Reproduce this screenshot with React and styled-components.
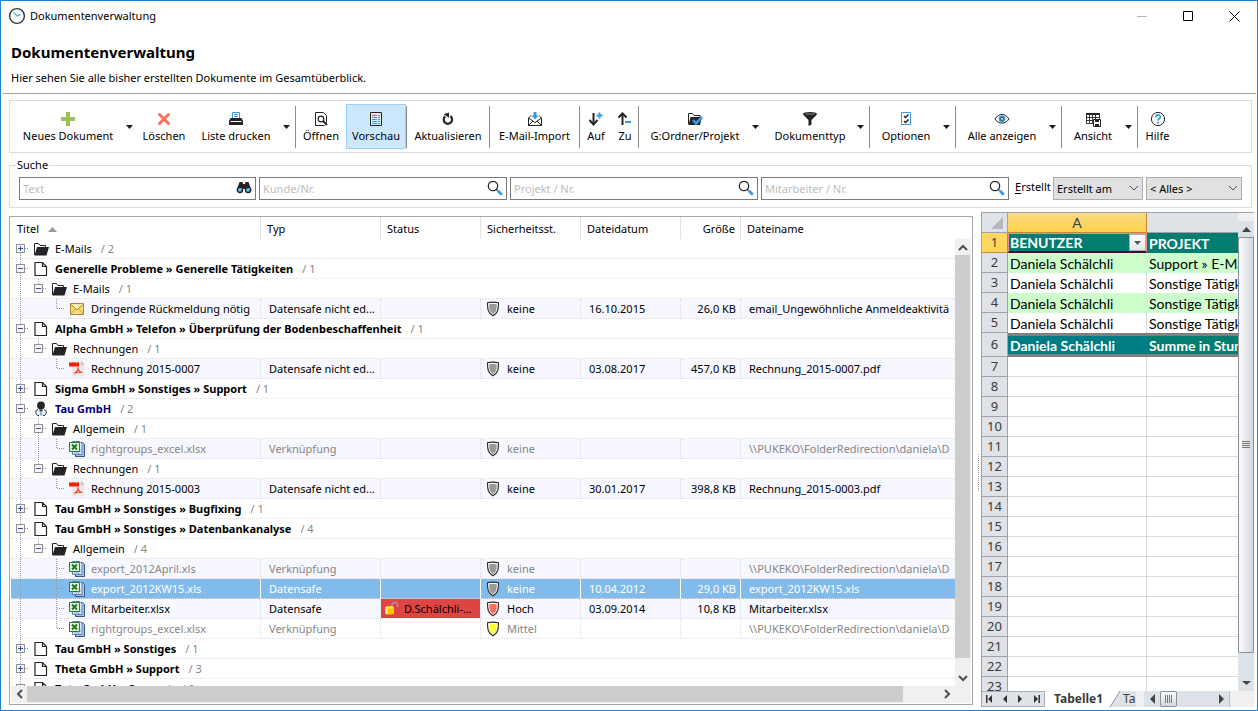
import React from "react";
import styled, { createGlobalStyle, css } from "styled-components";

const INK = "#222428";
const BLUE = "#3a9bdc";

const GlobalStyle = createGlobalStyle`
  *, *::before, *::after { box-sizing: border-box; }
  body {
    margin: 0;
    background: #fff;
    color: #000;
    font-family: "Noto Sans", "Open Sans", sans-serif;
    font-size: 11px;
    line-height: 16px;
  }
  button, input, select { font: inherit; color: inherit; }
  svg { display: block; flex: none; }
`;

/* ---------- window frame ---------- */

const Window = styled.div`
  display: flex;
  flex-direction: column;
  height: 100vh;
  min-width: 960px;
  border: 1px solid #1883d7;
  overflow: hidden;
`;

const TitleBar = styled.header`
  display: flex;
  align-items: center;
  height: 30px;
  padding-left: 7px;
  gap: 4px;
`;

const WindowTitle = styled.span`
  flex: 1;
`;

const WindowButton = styled.button`
  display: grid;
  place-items: center;
  width: 46px;
  height: 28px;
  padding: 0;
  border: 0;
  background: none;
`;

const WindowButtons = styled.div`
  display: flex;
`;

const Heading = styled.div`
  margin: 0 1px 0 2px;
  padding: 11px 8px 7px;
  border-bottom: 1px solid #a0a0a0;
`;

const PageTitle = styled.h1`
  margin: 0 0 8px;
  font-size: 15px;
  line-height: 20px;
  font-weight: 700;
`;

const Lead = styled.p`
  margin: 0;
`;

/* ---------- toolbar ---------- */

const Toolbar = styled.nav`
  display: flex;
  align-items: center;
  flex: none;
  margin: 6px 5px 0 8px;
  padding: 3px 1px;
  border: 1px solid #dcdcdc;
  overflow: hidden;
`;

const ToolButton = styled.button`
  display: flex;
  flex-direction: column;
  align-items: center;
  justify-content: center;
  flex: none;
  gap: 1px;
  width: ${(p) => p.$width}px;
  height: 45px;
  padding: 1px 0 0 ${(p) => (p.$split ? 5 : 0)}px;
  border: 1px solid ${(p) => (p.$active ? "#99d1ff" : "transparent")};
  background: ${(p) => (p.$active ? "#cce8ff" : "none")};
  white-space: nowrap;
`;

const DropButton = styled.button`
  display: grid;
  place-items: center;
  flex: none;
  width: 18px;
  height: 45px;
  padding: 0;
  border: 0;
  background: none;
`;

const Separator = styled.span`
  flex: none;
  width: 1px;
  height: 42px;
  background: #8c8c8c;
`;

/* ---------- search ---------- */

const SearchBox = styled.fieldset`
  flex: none;
  min-width: 0;
  margin: 4px 5px 0 8px;
  padding: 4px 9px 7px;
  border: 1px solid #dcdcdc;
`;

const SearchLegend = styled.legend`
  margin-left: -3px;
  padding: 0 1px;
`;

const SearchRow = styled.div`
  display: flex;
  gap: 3px;
`;

const Field = styled.label`
  position: relative;
  flex: ${(p) => p.$grow} 1 0;
`;

const FieldInput = styled.input`
  display: block;
  width: 100%;
  height: 23px;
  padding: 0 28px 0 3px;
  border: 1px solid #7a7a7a;
  border-radius: 0;
  background: #fff;
  outline: none;
  &::placeholder { color: #bdbdbd; opacity: 1; }
`;

const FieldIcon = styled.span`
  position: absolute;
  right: 4px;
  top: 3px;
`;

const CreatedLabel = styled.label`
  flex: none;
  width: 38px;
  padding: 2px 0 0 3px;
  white-space: nowrap;
  u { text-underline-offset: 2px; }
`;

const SelectWrap = styled.span`
  position: relative;
  width: ${(p) => p.$width}px;
  svg { position: absolute; right: 4px; top: 8px; pointer-events: none; }
`;

const Select = styled.select`
  appearance: none;
  display: block;
  width: 100%;
  height: 23px;
  padding: 0 18px 0 3px;
  border: 1px solid #adadad;
  border-radius: 0;
  background: #e1e1e1;
`;

/* ---------- document list ---------- */

const Main = styled.main`
  display: flex;
  flex: 1;
  min-height: 0;
  margin: 4px 3px 3px 8px;
`;

const ListPanel = styled.section`
  display: flex;
  flex-direction: column;
  flex: 1;
  min-width: 0;
  margin: 4px 0 2px;
  padding: 0 1px 1px;
  border: 1px solid #a5a7ad;
`;

const ListArea = styled.div`
  display: flex;
  flex: 1;
  min-height: 0;
`;

const ListViewport = styled.div`
  flex: 1;
  min-width: 0;
  overflow: hidden;
`;

const DocTable = styled.table`
  width: 100%;
  table-layout: fixed;
  border-collapse: separate;
  border-spacing: 0;
`;

const Head = styled.th`
  height: 22px;
  padding: 2px 5px 0 6px;
  border-right: ${(p) => (p.$last ? 0 : 1)}px solid #e2e2e2;
  font-weight: 400;
  text-align: ${(p) => p.$align || "left"};
  white-space: nowrap;
`;

const HeadInner = styled.span`
  display: flex;
  align-items: center;
  gap: 9px;
`;

const Row = styled.tr`
  color: ${(p) => (p.$tone === "muted" ? "#868686" : p.$tone === "selected" ? "#fff" : "#000")};
  background: ${(p) => (p.$tone === "selected" ? "#80bbeb" : p.$shade ? "#f7f7ff" : "#fff")};
`;

const Cell = styled.td`
  height: 20px;
  padding: 0 ${(p) => (p.$align ? 4 : 0)}px 0 ${(p) => (p.$tree ? 0 : p.$icon ? 5 : 8)}px;
  border-bottom: 1px dotted #dedee2;
  ${(p) =>
    p.$rule &&
    css`
      border-right: 1px ${p.$selected ? "solid #fff" : "dotted #dedee2"};
    `}
  ${(p) =>
    p.$alert &&
    css`
      padding-left: 3px;
      background: #dd4444;
      background-clip: padding-box;
    `}
  text-align: ${(p) => p.$align || "left"};
  line-height: 18px;
  white-space: nowrap;
  overflow: hidden;
`;

const CellFlex = styled.span`
  display: flex;
  align-items: center;
  gap: ${(p) => p.$gap || 0}px;
  height: 19px;
`;

const RowIcon = styled.span`
  display: grid;
  place-items: center;
  flex: none;
  width: 16px;
  height: 19px;
  margin: 0 6px 0 4px;
`;

const Name = styled.span`
  font-weight: ${(p) => (p.$bold ? 700 : 400)};
  color: ${(p) => (p.$navy ? "#000080" : "inherit")};
`;

const Count = styled.span`
  margin-left: 9px;
  color: #868686;
`;

const VScroll = styled.div`
  display: flex;
  flex-direction: column;
  flex: none;
  width: 16px;
  margin-top: 22px;
  background: #f0f0f0;
`;

const HScroll = styled.div`
  display: flex;
  flex: none;
  height: 17px;
  padding: 0 16px 1px 0;
  background: #f0f0f0;
`;

const ScrollButton = styled.button`
  display: grid;
  place-items: center;
  flex: none;
  width: 16px;
  height: 16px;
  padding: 0;
  border: 0;
  background: none;
`;

const ScrollTrack = styled.div`
  display: flex;
  flex: 1;
  flex-direction: ${(p) => (p.$vertical ? "column" : "row")};
  padding-right: ${(p) => (p.$vertical ? 1 : 0)}px;
`;

const ScrollThumb = styled.div`
  flex: 0 0 ${(p) => p.$size}%;
  background: #cdcdcd;
`;

const Splitter = styled.div`
  display: flex;
  align-items: center;
  justify-content: center;
  flex: none;
  width: 8px;
  padding: 26px 0 0 2px;
  &::after {
    content: "";
    height: 37px;
    border-left: 1px dotted #9a9a9a;
  }
`;

/* ---------- spreadsheet preview ---------- */

const SheetPanel = styled.section`
  display: flex;
  flex-direction: column;
  flex: none;
  width: 273px;
  border: 1px solid #9ea3aa;
  border-width: 1px 0 0 1px;
  background: #f0f0f0;
`;

const SheetBody = styled.div`
  display: flex;
  flex: 1;
  min-height: 0;
`;

const SheetViewport = styled.div`
  flex: 1;
  min-width: 0;
  overflow: hidden;
  background: #fff;
`;

const SheetTable = styled.table`
  width: 396px;
  table-layout: fixed;
  border-collapse: separate;
  border-spacing: 0;
  font-family: Lato, "Open Sans", sans-serif;
  font-size: 14px;
  line-height: 17px;
`;

const ColumnHead = styled.th`
  height: 20px;
  padding: 0;
  border-right: 1px solid ${(p) => (p.$active ? "#c58a2f" : "#9ea3aa")};
  border-bottom: 1px solid ${(p) => (p.$active ? "#c58a2f" : "#9ea3aa")};
  background: ${(p) => (p.$active ? "linear-gradient(#f9d984, #ffd24d)" : "#dfe2e7")};
  font-weight: 400;
  color: #3b3b3b;
  svg { margin-left: auto; margin-right: 4px; }
`;

const RowHead = styled.th`
  height: ${(p) => (p.$tall ? 24 : 20)}px;
  padding: 0;
  border-right: 1px solid ${(p) => (p.$active ? "#c58a2f" : "#9ea3aa")};
  border-bottom: 1px solid ${(p) => (p.$active ? "#c58a2f" : "#9ea3aa")};
  background: ${(p) => (p.$active ? "#ffd75e" : "#dfe2e7")};
  font-family: "Noto Sans", sans-serif;
  font-size: 13px;
  font-weight: 400;
  color: #3b3b3b;
`;

const teal = css`
  background: repeating-linear-gradient(90deg, #007f86 0 1px, #007a6c 1px 2px);
  color: #fff;
  font-weight: 700;
`;

const sheetTones = {
  plain: css`
    border-right: 1px solid #d9dadc;
    border-bottom: 1px solid #d9dadc;
  `,
  white: css`
    border-right: 1px solid #d9dadc;
  `,
  green: css`
    background: #ccffcc;
  `,
  head: teal,
  total: css`
    ${teal}
    border-top: 3px solid #808080;
    border-bottom: 3px solid #808080;
  `,
};

const SheetCell = styled.td`
  padding: 0 0 0 2px;
  white-space: nowrap;
  overflow: hidden;
  ${(p) => sheetTones[p.$tone]}
  ${(p) =>
    p.$cursor &&
    css`
      border: 1px solid #f58a8a;
      border-bottom: 2px solid #3a0d3f;
      padding-left: 1px;
    `}
`;

const FilterCell = styled.span`
  display: flex;
  align-items: center;
  justify-content: space-between;
`;

const FilterButton = styled.button`
  display: grid;
  place-items: center;
  width: 17px;
  height: 17px;
  padding: 0;
  border: 1px solid #a9afb8;
  background: linear-gradient(#fff, #e3e6ea);
`;

const SheetScroll = styled.div`
  display: flex;
  flex-direction: column;
  flex: none;
  width: 16px;
  padding-top: 8px;
  background: #f0f0f0;
`;

const SheetScrollButton = styled.button`
  display: grid;
  place-items: center;
  flex: none;
  width: 16px;
  height: 16px;
  padding: 0;
  border: 0;
  background: #dde2e8;
`;

const SheetTrack = styled.div`
  display: flex;
  flex-direction: column;
  flex: 1;
  background: #dde2e8;
`;

const SheetThumb = styled.div`
  display: grid;
  place-items: center;
  flex: 0 0 95%;
  border: 1px solid #8b9097;
  border-radius: 1px;
  background: linear-gradient(90deg, #fbfbfc, #d4d8de);
`;

const SheetFooter = styled.div`
  display: flex;
  align-items: stretch;
  height: 16px;
  flex: none;
`;

const TabNav = styled.div`
  display: flex;
  align-items: center;
  flex: none;
  width: 63px;
  border: 1px solid #a9afb8;
  border-left: 0;
  background: #dfe3e8;
`;

const TabNavButton = styled.button`
  display: grid;
  place-items: center;
  flex: 1;
  height: 14px;
  padding: 0;
  border: 0;
  background: none;
`;

const SheetTabs = styled.div`
  display: flex;
  flex: 1;
  min-width: 0;
  overflow: hidden;
  background: #dfe3e8;
`;

const SheetTab = styled.button`
  flex: none;
  height: 16px;
  padding: 0 ${(p) => (p.$active ? 6 : 2)}px 0 ${(p) => (p.$active ? 9 : 2)}px;
  border: 0;
  background: ${(p) => (p.$active ? "#fff" : "#dfe3e8")};
  color: #3b3b3b;
  font-size: 12px;
  line-height: 16px;
  font-weight: ${(p) => (p.$active ? 700 : 400)};
`;

const SheetHScroll = styled.div`
  display: flex;
  align-items: center;
  flex: none;
  width: 86px;
  margin: 0 24px 0 8px;
  border-right: 1px solid #b9bec6;
  background: #dde2e8;
`;

const SheetHThumb = styled.div`
  display: grid;
  place-items: center;
  width: 17px;
  height: 16px;
  margin-right: auto;
  border: 1px solid #8b9097;
  border-radius: 2px;
  background: linear-gradient(#fbfbfc, #d4d8de);
`;

/* ---------- icons ---------- */

const Svg = ({ w = 16, h = 16, children, ...rest }) => (
  <svg width={w} height={h} viewBox={`0 0 ${w} ${h}`} fill="none" aria-hidden="true" {...rest}>
    {children}
  </svg>
);

const ClockIcon = () => (
  <Svg w={18} h={18}>
    <circle cx="9" cy="9" r="7.4" stroke="#2d3440" strokeWidth="1.4" />
    <path d="M5.500 5.500L9 9l3.500-1.500" stroke="#55b9c4" strokeWidth="1.400" />
  </Svg>
);
const PlusIcon = () => (
  <Svg><path d="M6 1h4v5h5v4h-5v5H6v-5H1V6h5z" fill="#9fc054" /></Svg>
);
const CrossIcon = () => (
  <Svg><path d="M3.500 3.500l9 9M12.500 3.500l-9 9" stroke="#fb7258" strokeWidth="3" strokeLinecap="round" /></Svg>
);
const PrinterIcon = () => (
  <Svg>
    <path d="M4.500 7V1.500h7V7M6 3.500h4M6 5.500h4" stroke={BLUE} />
    <path d="M2.500 7h11L15 10v4H1v-4z" fill={INK} />
    <path d="M2.500 10.500h11" stroke="#fff" />
  </Svg>
);
const OpenIcon = () => (
  <Svg>
    <path d="M11.500 14.500h-9v-13h8l3 3v7" stroke={INK} />
    <circle cx="8" cy="8" r="2.800" stroke={INK} strokeWidth="1.200" />
    <path d="M10 10l4 4" stroke={INK} strokeWidth="2" />
  </Svg>
);
const PreviewIcon = () => (
  <Svg>
    <path d="M2.500 1.500h11v13h-11z" stroke={INK} fill="#d9efff" />
    <path d="M4 4.500h8M4 6.500h8M4 8.500h8M4 10.500h8M4 12.500h8" stroke={BLUE} strokeDasharray="5 1" />
  </Svg>
);
const RefreshIcon = () => (
  <Svg>
    <path d="M5.200 5.400a4.200 4.200 0 1 0 5.200-.2" stroke={INK} strokeWidth="2.200" />
    <path d="M3.600 3.200L9 1.400v5.400z" fill={INK} />
  </Svg>
);
const MailImportIcon = () => (
  <Svg>
    <path d="M4 4.500L1.500 7v7.500h13V7L12 4.500M1.500 7L8 11.500 14.500 7M1.500 14.500L6 10M14.500 14.500L10 10" stroke={INK} />
    <path d="M6.500 1h3v3.500h2L8 8.500 4.500 4.500h2z" fill={BLUE} />
  </Svg>
);
const ExpandIcon = () => (
  <Svg>
    <path d="M5.500 2v11" stroke={INK} strokeWidth="2" />
    <path d="M1.500 9l4 4.500 4-4.500" stroke={INK} strokeWidth="2" />
    <path d="M11.500 1.500v6M8.500 4.500h6" stroke={BLUE} strokeWidth="2" />
  </Svg>
);
const CollapseIcon = () => (
  <Svg>
    <path d="M5.500 3v11" stroke={INK} strokeWidth="2" />
    <path d="M1.500 6.500l4-4 4 4" stroke={INK} strokeWidth="2" />
    <path d="M8 11h6" stroke={BLUE} strokeWidth="2" />
  </Svg>
);
const FolderCheckIcon = () => (
  <Svg>
    <path d="M1.500 13V2.500h4l1.500 2h6V6" stroke={INK} />
    <path d="M3.500 6H15l-2 8H1.500z" fill={INK} />
    <path d="M6 9l3 3.500L15 6" stroke={BLUE} strokeWidth="2.600" />
  </Svg>
);
const FunnelIcon = () => (
  <Svg>
    <path d="M1 3.500L6.500 9v6l3-1.500V9L15 3.500z" fill={INK} />
    <ellipse cx="8" cy="3" rx="7" ry="2" fill={INK} />
    <path d="M3.500 3h9" stroke="#888" />
  </Svg>
);
const OptionsIcon = () => (
  <Svg>
    <path d="M3.500 1.500h9v12h-9z" stroke={BLUE} />
    <path d="M6 5l1.500 1.500L10.500 3.500M6 10l1.500 1.500L10.500 8.500" stroke={INK} strokeWidth="1.500" />
  </Svg>
);
const EyeIcon = () => (
  <Svg>
    <path d="M1 8c3.500-6 10.500-6 14 0-3.500 5.500-10.500 5.500-14 0z" stroke={INK} />
    <circle cx="8" cy="7.800" r="3.400" fill={BLUE} />
    <circle cx="8" cy="7.800" r="1.500" fill="#fff" stroke={INK} strokeWidth=".8" />
  </Svg>
);
const GridSaveIcon = () => (
  <Svg>
    <path d="M1 2h14v2H1z" fill={INK} />
    <path d="M1.500 2v10.500H9M14.500 2v6M4.500 4v8M7.500 4v8M10.500 4v5M1 6.500h13M1 9.500h8" stroke={INK} strokeWidth=".9" />
    <path d="M8.500 8.500h7v7h-7z" fill="#fff" stroke={INK} />
    <path d="M10 8.500h4v2.500h-4zM10 13h4v2h-4z" fill={INK} />
  </Svg>
);
const HelpIcon = () => (
  <Svg>
    <circle cx="8" cy="8" r="6.600" stroke={INK} />
    <path d="M5.800 6.200c0-3 4.500-3 4.500-.3 0 1.600-2.300 1.700-2.300 3.600" stroke={BLUE} strokeWidth="1.700" />
    <path d="M7 10.800h2v1.800H7z" fill={BLUE} />
  </Svg>
);
const DownTriangle = ({ w = 7, color = "#1c1c1c" }) => (
  <Svg w={w} h={4}><path d={`M0 0h${w}L${w / 2} 4z`} fill={color} /></Svg>
);
const UpTriangle = ({ w = 9, h = 5, color = "#9a9a9a" }) => (
  <Svg w={w} h={h}><path d={`M0 ${h}h${w}L${w / 2} 0z`} fill={color} /></Svg>
);
const BinocularsIcon = () => (
  <Svg>
    <path d="M3.500 2h3l.5 2h2l.5-2h3l2.500 7v3h-5V9H6v3H1V9z" fill={INK} />
    <circle cx="3.900" cy="10" r="2.700" fill={BLUE} stroke={INK} strokeWidth="1.200" />
    <circle cx="12.100" cy="10" r="2.700" fill={BLUE} stroke={INK} strokeWidth="1.200" />
    <path d="M3 10.500l2-2M11.200 10.500l2-2" stroke="#fff" />
  </Svg>
);
const SearchIcon = () => (
  <Svg>
    <circle cx="6" cy="6" r="4.700" stroke={INK} strokeWidth="1.200" />
    <path d="M9.500 9.500l1 1" stroke={INK} strokeWidth="1.500" />
    <path d="M10.800 10.800l4 4" stroke={BLUE} strokeWidth="2.800" />
  </Svg>
);
const Chevron = ({ d = "M1 1l4 4 4-4", w = 10, h = 6, width = 1 }) => (
  <Svg w={w} h={h}><path d={d} stroke="#505050" strokeWidth={width} /></Svg>
);
const FolderIcon = () => (
  <Svg>
    <path d="M1.500 14V2.500h4l1.500 2h5.500V6" stroke={INK} />
    <path d="M4 6h12l-2.500 8.500h-12z" fill={INK} />
  </Svg>
);
const PageIcon = () => (
  <Svg><path d="M2 1.500h7.500l4 4v9H2zM9.500 2v3.500H13" stroke={INK} strokeWidth="1.200" fill="#fff" /></Svg>
);
const PersonIcon = () => (
  <Svg>
    <path d="M5 8.500C3 9 2.500 10 3 12.500l1.500 2h1.500M11 8.500c2 .5 2.500 1.500 2 4l-1.500 2H10" stroke={INK} fill="#fff" />
    <circle cx="8" cy="4.500" r="3.900" fill={INK} />
    <path d="M6.500 8.500h3v2h-3z" fill={INK} />
    <path d="M7.200 10h1.600l.7 4.500h-3z" fill="#6db9e8" />
  </Svg>
);
const MailIcon = () => (
  <Svg>
    <path d="M1.500 2.500h13v11h-13z" fill="#f7dc7c" stroke="#a8863a" />
    <path d="M2 3.500l6 5.500 6-5.500" stroke="#a8863a" fill="#fff3b8" />
    <path d="M2 13l4-5M14 13l-4-5" stroke="#c9a445" />
  </Svg>
);
const PdfIcon = () => (
  <Svg>
    <path d="M3 0h9l3.500 3.500V15.500H3z" fill="#e9e9e9" />
    <path d="M12 0l3.500 3.500H12z" fill="#b8b8b8" />
    <path d="M0 1.500h10v4H0z" fill="#f21c0b" />
    <path d="M5 12.500c2.500-1 4.500-4 4-6.500-.5 2.500 1.500 5.500 4.500 5.500-3-.8-6-.3-8.500 1z" stroke="#ee4433" strokeWidth="1.200" />
  </Svg>
);
const ExcelIcon = () => (
  <Svg>
    <path d="M6.500 1.500h7l2 2v12h-9z" fill="#a9c4e6" stroke="#35568c" />
    <path d="M3.500 .5h7.500l2 2v11h-9.500z" fill="#e4eefa" stroke="#5a7fb5" />
    <path d="M5 12h6M11 8v3" stroke="#8aa9d6" />
    <path d="M.5 1.500h10v9H.5z" fill="#e8f6e2" stroke="#2a7a2a" />
    <path d="M3 3.500l5 5M8 3.500l-5 5" stroke="#1f7a1f" strokeWidth="2" />
  </Svg>
);
const ShieldIcon = ({ color }) => (
  <Svg w={14} h={16}>
    <path d="M1.500 1.800c4-1 7-1 11 0 0 7-.5 10-5.500 13-5-3-5.500-6-5.500-13z" fill="#fff" stroke="#2b2b2b" strokeWidth="1.100" />
    <path d="M3.200 3.200c3-.7 4.600-.7 7.600 0 0 5.300-.4 7.600-3.800 9.800-3.400-2.200-3.800-4.500-3.800-9.800z" fill={color} />
  </Svg>
);
const LockIcon = () => (
  <Svg>
    <path d="M8 6V4.500c0-4 5.500-4 5.500-.5v2" stroke="#b98a8a" strokeWidth="1.600" />
    <path d="M1 6.500c0-1.500 9-1.500 9 0V12c0 2-9 2-9 0z" fill="#ffc400" />
    <ellipse cx="5.500" cy="6.500" rx="4.500" ry="1.300" fill="#ffe14a" />
    <path d="M2.800 8v5" stroke="#fff6a8" strokeWidth="1.500" />
  </Svg>
);

/* One 18px step of the tree: dotted guides, and the expander box if any. */
const TreeStep = ({ up, down, branch, box }) => (
  <Svg w={18} h={20} shapeRendering="crispEdges">
    {up && <path d="M9.500 0v10" stroke="#9a9a9a" strokeDasharray="1 1" />}
    {down && <path d="M9.500 10v10" stroke="#9a9a9a" strokeDasharray="1 1" />}
    {branch && <path d="M10 9.500h8" stroke="#9a9a9a" strokeDasharray="1 1" />}
    {box && (
      <>
        <rect x="5.500" y="5.500" width="8" height="8" fill="#f4f4f4" stroke="#919191" />
        <path d={box === "+" ? "M7 9.500h5M9.500 7v5" : "M7 9.500h5"} stroke="#3a52a0" />
      </>
    )}
  </Svg>
);

/* ---------- data ---------- */

const TOOLS = [
  { label: "Neues Dokument", icon: PlusIcon, width: 109, split: true },
  { label: "Löschen", icon: CrossIcon, width: 52 },
  { label: "Liste drucken", icon: PrinterIcon, width: 87, split: true },
  null,
  { label: "Öffnen", icon: OpenIcon, width: 50 },
  { label: "Vorschau", icon: PreviewIcon, width: 60, active: true },
  null,
  { label: "Aktualisieren", icon: RefreshIcon, width: 82 },
  null,
  { label: "E-Mail-Import", icon: MailImportIcon, width: 89 },
  null,
  { label: "Auf", icon: ExpandIcon, width: 32 },
  { label: "Zu", icon: CollapseIcon, width: 26 },
  null,
  { label: "G:Ordner/Projekt", icon: FolderCheckIcon, width: 107, split: true },
  { label: "Dokumenttyp", icon: FunnelIcon, width: 87, split: true },
  null,
  { label: "Optionen", icon: OptionsIcon, width: 67, split: true },
  null,
  { label: "Alle anzeigen", icon: EyeIcon, width: 87, split: true },
  null,
  { label: "Ansicht", icon: GridSaveIcon, width: 57, split: true },
  null,
  { label: "Hilfe", icon: HelpIcon, width: 39 },
];

const FIELDS = [
  { label: "Text", icon: BinocularsIcon, grow: 237 },
  { label: "Kunde/Nr.", icon: SearchIcon, grow: 248 },
  { label: "Projekt / Nr.", icon: SearchIcon, grow: 248 },
  { label: "Mitarbeiter / Nr.", icon: SearchIcon, grow: 248 },
];

const SHIELD = { keine: "#9b9b9b", Hoch: "#ff735c", Mittel: "#ffff33" };

const LINK_PATH = "\\\\PUKEKO\\FolderRedirection\\daniela\\D";

const ROWS = [
  { level: 0, box: "+", icon: FolderIcon, name: "E-Mails", count: 2, first: true },
  { level: 0, box: "-", icon: PageIcon, name: "Generelle Probleme » Generelle Tätigkeiten", count: 1, bold: true },
  { level: 1, box: "-", icon: FolderIcon, name: "E-Mails", count: 1 },
  { level: 2, icon: MailIcon, name: "Dringende Rückmeldung nötig", type: "Datensafe nicht ed...", guard: "keine", date: "16.10.2015", size: "26,0 KB", file: "email_Ungewöhnliche Anmeldeaktivitä", shade: true },
  { level: 0, box: "-", icon: PageIcon, name: "Alpha GmbH » Telefon » Überprüfung der Bodenbeschaffenheit", count: 1, bold: true },
  { level: 1, box: "-", icon: FolderIcon, name: "Rechnungen", count: 1 },
  { level: 2, icon: PdfIcon, name: "Rechnung 2015-0007", type: "Datensafe nicht ed...", guard: "keine", date: "03.08.2017", size: "457,0 KB", file: "Rechnung_2015-0007.pdf", shade: true },
  { level: 0, box: "+", icon: PageIcon, name: "Sigma GmbH » Sonstiges » Support", count: 1, bold: true },
  { level: 0, box: "-", icon: PersonIcon, name: "Tau GmbH", count: 2, bold: true, navy: true },
  { level: 1, box: "-", icon: FolderIcon, name: "Allgemein", count: 1, more: true },
  { level: 2, icon: ExcelIcon, name: "rightgroups_excel.xlsx", type: "Verknüpfung", guard: "keine", file: LINK_PATH, tone: "muted", shade: true, parentMore: true },
  { level: 1, box: "-", icon: FolderIcon, name: "Rechnungen", count: 1 },
  { level: 2, icon: PdfIcon, name: "Rechnung 2015-0003", type: "Datensafe nicht ed...", guard: "keine", date: "30.01.2017", size: "398,8 KB", file: "Rechnung_2015-0003.pdf", shade: true },
  { level: 0, box: "+", icon: PageIcon, name: "Tau GmbH » Sonstiges » Bugfixing", count: 1, bold: true },
  { level: 0, box: "-", icon: PageIcon, name: "Tau GmbH » Sonstiges » Datenbankanalyse", count: 4, bold: true },
  { level: 1, box: "-", icon: FolderIcon, name: "Allgemein", count: 4 },
  { level: 2, icon: ExcelIcon, name: "export_2012April.xls", type: "Verknüpfung", guard: "keine", file: LINK_PATH, tone: "muted", shade: true, more: true },
  { level: 2, icon: ExcelIcon, name: "export_2012KW15.xls", type: "Datensafe", guard: "keine", date: "10.04.2012", size: "29,0 KB", file: "export_2012KW15.xls", tone: "selected", more: true },
  { level: 2, icon: ExcelIcon, name: "Mitarbeiter.xlsx", type: "Datensafe", status: "D.Schälchli-...", guard: "Hoch", date: "03.09.2014", size: "10,8 KB", file: "Mitarbeiter.xlsx", shade: true, more: true },
  { level: 2, icon: ExcelIcon, name: "rightgroups_excel.xlsx", type: "Verknüpfung", guard: "Mittel", file: LINK_PATH, tone: "muted" },
  { level: 0, box: "+", icon: PageIcon, name: "Tau GmbH » Sonstiges", count: 1, bold: true },
  { level: 0, box: "+", icon: PageIcon, name: "Theta GmbH » Support", count: 3, bold: true },
  { level: 0, box: "+", icon: PageIcon, name: "Zeta GmbH » Support", count: 2, bold: true },
];

const SHEET = [
  ["BENUTZER", "PROJEKT", "head"],
  ["Daniela Schälchli", "Support » E-Mails", "green"],
  ["Daniela Schälchli", "Sonstige Tätigkeiten", "white"],
  ["Daniela Schälchli", "Sonstige Tätigkeiten", "green"],
  ["Daniela Schälchli", "Sonstige Tätigkeiten", "white"],
  ["Daniela Schälchli", "Summe in Stunden", "total"],
  ...Array.from({ length: 17 }, () => ["", "", "plain"]),
];

/* ---------- parts ---------- */

function TreeCell({ row }) {
  const Icon = row.icon;
  return (
    <CellFlex>
      {row.level === 0 ? (
        <TreeStep up={!row.first} down branch box={row.box} />
      ) : (
        <TreeStep up down />
      )}
      {row.level === 1 && <TreeStep up down={row.more} branch box={row.box} />}
      {row.level === 2 && (
        <>
          <TreeStep up={row.parentMore} down={row.parentMore} />
          <TreeStep up down={row.more} branch />
        </>
      )}
      <RowIcon><Icon /></RowIcon>
      <Name $bold={row.bold} $navy={row.navy}>{row.name}</Name>
      {row.count && <Count>/ {row.count}</Count>}
    </CellFlex>
  );
}

function DocRow({ row }) {
  if (row.level < 2) {
    return (
      <Row>
        <Cell $tree colSpan={7}><TreeCell row={row} /></Cell>
      </Row>
    );
  }
  const sel = row.tone === "selected";
  return (
    <Row $tone={row.tone} $shade={row.shade} aria-selected={sel}>
      <Cell $tree $rule $selected={sel}><TreeCell row={row} /></Cell>
      <Cell $rule $selected={sel}>{row.type}</Cell>
      <Cell $rule $selected={sel} $alert={!!row.status}>
        {row.status && <CellFlex $gap={4}><LockIcon />{row.status}</CellFlex>}
      </Cell>
      <Cell $rule $icon $selected={sel}>
        <CellFlex $gap={7}><ShieldIcon color={SHIELD[row.guard]} />{row.guard}</CellFlex>
      </Cell>
      <Cell $rule $selected={sel}>{row.date}</Cell>
      <Cell $rule $align="right" $selected={sel}>{row.size}</Cell>
      <Cell>{row.file}</Cell>
    </Row>
  );
}

function DocumentList() {
  return (
    <ListPanel>
      <ListArea>
        <ListViewport>
          <DocTable>
            <colgroup>
              <col width="250" />
              <col width="120" />
              <col width="100" />
              <col width="100" />
              <col width="100" />
              <col width="60" />
              <col />
            </colgroup>
            <thead>
              <tr>
                <Head><HeadInner>Titel <UpTriangle /></HeadInner></Head>
                <Head>Typ</Head>
                <Head>Status</Head>
                <Head>Sicherheitsst.</Head>
                <Head>Dateidatum</Head>
                <Head $align="right">Größe</Head>
                <Head $last>Dateiname</Head>
              </tr>
            </thead>
            <tbody>
              {ROWS.map((row, i) => <DocRow key={i} row={row} />)}
            </tbody>
          </DocTable>
        </ListViewport>
        <VScroll>
          <ScrollButton aria-label="Nach oben"><Chevron d="M1 6l4-4 4 4" h={7} width={2} /></ScrollButton>
          <ScrollTrack $vertical><ScrollThumb $size={97} /></ScrollTrack>
          <ScrollButton aria-label="Nach unten"><Chevron d="M1 1l4 4 4-4" h={7} width={2} /></ScrollButton>
        </VScroll>
      </ListArea>
      <HScroll>
        <ScrollButton aria-label="Nach links"><Chevron d="M6 1L2 5l4 4" w={7} h={10} width={2} /></ScrollButton>
        <ScrollTrack><ScrollThumb $size={96} /></ScrollTrack>
        <ScrollButton aria-label="Nach rechts"><Chevron d="M1 1l4 4-4 4" w={7} h={10} width={2} /></ScrollButton>
      </HScroll>
    </ListPanel>
  );
}

function SheetPreview() {
  return (
    <SheetPanel>
      <SheetBody>
        <SheetViewport>
          <SheetTable>
            <colgroup>
              <col width="26" />
              <col width="139" />
              <col width="231" />
            </colgroup>
            <thead>
              <tr>
                <ColumnHead>
                  <Svg w={12} h={12}><path d="M12 0v12H0z" fill="#b4b8be" /></Svg>
                </ColumnHead>
                <ColumnHead $active>A</ColumnHead>
                <ColumnHead>B</ColumnHead>
              </tr>
            </thead>
            <tbody>
              {SHEET.map(([user, project, tone], i) => (
                <tr key={i}>
                  <RowHead $active={i === 0} $tall={tone === "total"}>{i + 1}</RowHead>
                  <SheetCell $tone={tone} $cursor={i === 0}>
                    {i === 0 ? (
                      <FilterCell>
                        {user}
                        <FilterButton aria-label="Filter"><DownTriangle color="#555" /></FilterButton>
                      </FilterCell>
                    ) : user}
                  </SheetCell>
                  <SheetCell $tone={tone}>{project}</SheetCell>
                </tr>
              ))}
            </tbody>
          </SheetTable>
        </SheetViewport>
        <SheetScroll>
          <SheetScrollButton aria-label="Nach oben"><UpTriangle color="#444" /></SheetScrollButton>
          <SheetTrack>
            <SheetThumb>
              <Svg w={8} h={8}><path d="M0 .5h8M0 2.500h8M0 4.500h8M0 6.500h8" stroke="#777" /></Svg>
            </SheetThumb>
          </SheetTrack>
          <SheetScrollButton aria-label="Nach unten"><DownTriangle w={9} color="#444" /></SheetScrollButton>
        </SheetScroll>
      </SheetBody>
      <SheetFooter>
        <TabNav>
          <TabNavButton aria-label="Erstes Blatt"><Svg w={7} h={8}><path d="M0 0h1.500v8H0zM6 0v8L2 4z" fill="#333" /></Svg></TabNavButton>
          <TabNavButton aria-label="Voriges Blatt"><Svg w={5} h={8}><path d="M4 0v8L0 4z" fill="#333" /></Svg></TabNavButton>
          <TabNavButton aria-label="Nächstes Blatt"><Svg w={5} h={8}><path d="M0 0v8l4-4z" fill="#333" /></Svg></TabNavButton>
          <TabNavButton aria-label="Letztes Blatt"><Svg w={7} h={8}><path d="M5.500 0H7v8H5.500zM1 0v8l4-4z" fill="#333" /></Svg></TabNavButton>
        </TabNav>
        <SheetTabs>
          <SheetTab $active>Tabelle1</SheetTab>
          <Svg w={12} h={16}><path d="M0 0h11L1 16H0z" fill="#fff" /><path d="M11 0L1 16" stroke="#8b9097" /></Svg>
          <SheetTab>Tabelle2</SheetTab>
        </SheetTabs>
        <SheetHScroll>
          <SheetScrollButton aria-label="Nach links"><Svg w={5} h={10}><path d="M5 0v10L0 5z" fill="#444" /></Svg></SheetScrollButton>
          <SheetHThumb>
            <Svg w={8} h={8}><path d="M.5 0v8M2.500 0v8M4.500 0v8M6.500 0v8" stroke="#777" /></Svg>
          </SheetHThumb>
          <SheetScrollButton aria-label="Nach rechts"><Svg w={5} h={10}><path d="M0 0v10l5-5z" fill="#444" /></Svg></SheetScrollButton>
        </SheetHScroll>
      </SheetFooter>
    </SheetPanel>
  );
}

export default function App() {
  return (
    <>
      <GlobalStyle />
      <Window>
        <TitleBar>
          <ClockIcon />
          <WindowTitle>Dokumentenverwaltung</WindowTitle>
          <WindowButtons>
            <WindowButton aria-label="Minimieren"><Svg w={10} h={10}><path d="M0 5.500h10" stroke="#b5b5b5" /></Svg></WindowButton>
            <WindowButton aria-label="Maximieren"><Svg w={11} h={11}><path d="M.5 .5h9v9h-9z" stroke="#000" /></Svg></WindowButton>
            <WindowButton aria-label="Schließen"><Svg w={11} h={11}><path d="M.5 .5l10 10M10.500 .5l-10 10" stroke="#000" /></Svg></WindowButton>
          </WindowButtons>
        </TitleBar>

        <Heading>
          <PageTitle>Dokumentenverwaltung</PageTitle>
          <Lead>Hier sehen Sie alle bisher erstellten Dokumente im Gesamtüberblick.</Lead>
        </Heading>

        <Toolbar>
          {TOOLS.map((tool, i) => {
            if (!tool) return <Separator key={i} />;
            const Icon = tool.icon;
            return (
              <React.Fragment key={i}>
                <ToolButton $width={tool.width} $split={tool.split} $active={tool.active}>
                  <Icon />
                  {tool.label}
                </ToolButton>
                {tool.split && (
                  <DropButton aria-label={`${tool.label}: Auswahl`}><DownTriangle /></DropButton>
                )}
              </React.Fragment>
            );
          })}
        </Toolbar>

        <SearchBox>
          <SearchLegend>Suche</SearchLegend>
          <SearchRow>
            {FIELDS.map(({ label, icon: Icon, grow }) => (
              <Field key={label} $grow={grow}>
                <FieldInput type="text" placeholder={label} aria-label={label} />
                <FieldIcon><Icon /></FieldIcon>
              </Field>
            ))}
            <CreatedLabel htmlFor="created"><u>E</u>rstellt</CreatedLabel>
            <SelectWrap $width={90}>
              <Select id="created"><option>Erstellt am</option></Select>
              <Chevron />
            </SelectWrap>
            <SelectWrap $width={96}>
              <Select aria-label="Zeitraum"><option>&lt; Alles &gt;</option></Select>
              <Chevron />
            </SelectWrap>
          </SearchRow>
        </SearchBox>

        <Main>
          <DocumentList />
          <Splitter />
          <SheetPreview />
        </Main>
      </Window>
    </>
  );
}
